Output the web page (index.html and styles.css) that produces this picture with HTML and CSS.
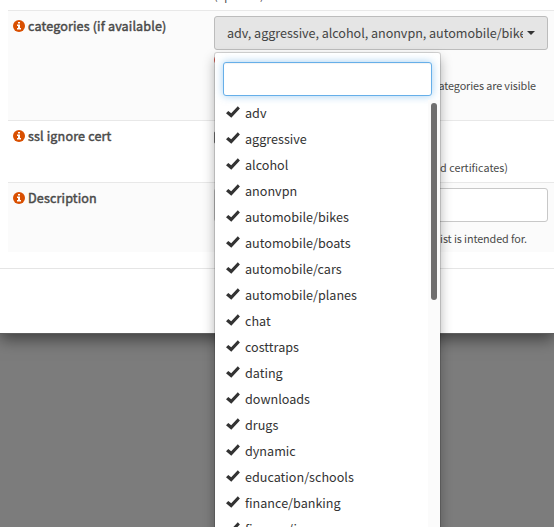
FILE: index.html
```html
<!DOCTYPE html>
<html lang="en">
<head>
<meta charset="utf-8">
<title>Edit blacklist</title>
<link rel="stylesheet" href="styles.css">
</head>
<body>
<svg class="defs" aria-hidden="true">
  <symbol id="info" viewBox="0 0 12 12">
    <circle cx="6" cy="6" r="6" fill="#d94f00"/>
    <path fill="#fff" d="M5 2h2v1.600H5zM4 4.500h3v3.600h1v1.500H4V8.100h1V6H4z"/>
  </symbol>
  <symbol id="check" viewBox="0 0 14 12">
    <path fill="#333" d="M0 7.300 2.300 4.900 5.200 7.300 11.800.2 13.900 2.400 5.300 11.700Z"/>
  </symbol>
</svg>
<main class="modal">
  <div class="previous"><small>(optional)</small></div>
  <section class="row row-categories">
    <div class="label"><svg><use href="#info"/></svg><b>categories (if available)</b></div>
    <div class="field">
      <button class="select"><span>adv, aggressive, alcohol, anonvpn, automobile/bikes</span><i class="caret"></i></button>
      <div class="clear"></div>
      <small class="help visible-help">categories are visible</small>
      <div class="menu">
        <input class="search" type="text" aria-label="Search">
        <div class="list">
          <ul>
            <li><svg><use href="#check"/></svg><span>adv</span></li>
            <li><svg><use href="#check"/></svg><span>aggressive</span></li>
            <li><svg><use href="#check"/></svg><span>alcohol</span></li>
            <li><svg><use href="#check"/></svg><span>anonvpn</span></li>
            <li><svg><use href="#check"/></svg><span>automobile/bikes</span></li>
            <li><svg><use href="#check"/></svg><span>automobile/boats</span></li>
            <li><svg><use href="#check"/></svg><span>automobile/cars</span></li>
            <li><svg><use href="#check"/></svg><span>automobile/planes</span></li>
            <li><svg><use href="#check"/></svg><span>chat</span></li>
            <li><svg><use href="#check"/></svg><span>costtraps</span></li>
            <li><svg><use href="#check"/></svg><span>dating</span></li>
            <li><svg><use href="#check"/></svg><span>downloads</span></li>
            <li><svg><use href="#check"/></svg><span>drugs</span></li>
            <li><svg><use href="#check"/></svg><span>dynamic</span></li>
            <li><svg><use href="#check"/></svg><span>education/schools</span></li>
            <li><svg><use href="#check"/></svg><span>finance/banking</span></li>
            <li><svg><use href="#check"/></svg><span>finance/insurance</span></li>
          </ul>
          <div class="track"><div class="thumb"></div></div>
        </div>
      </div>
    </div>
  </section>
  <section class="row row-ssl">
    <div class="label"><svg><use href="#info"/></svg><b>ssl ignore cert</b></div>
    <div class="field">
      <div class="checkbox"></div>
      <small class="help cert-help">d certificates)</small>
    </div>
  </section>
  <section class="row row-description">
    <div class="label"><svg><use href="#info"/></svg><b>Description</b></div>
    <div class="field">
      <input class="text" type="text" aria-label="Description">
      <small class="help list-help">list is intended for.</small>
    </div>
  </section>
  <footer class="footer"></footer>
</main>
</body>
</html>
```
FILE: styles.css
```css
* { box-sizing: border-box; }
body {
  margin: 0;
  height: 527px;
  overflow: hidden;
  background: #7c7c7c;
  color: #3c3c3b;
  font: 12.6px/20px "Noto Sans CJK SC", "Noto Sans", sans-serif;
}
.defs { position: absolute; width: 0; height: 0; }
.modal {
  height: 334px;
  background: #fff;
  border-bottom: 1px solid #5e5e5e;
  box-shadow: 0 5px 15px rgba(0, 0, 0, .5);
}
.previous { height: 10px; padding-left: 214px; overflow: hidden; }
.previous small { display: block; margin-top: -12px; font-size: 10.8px; line-height: 14px; color: #4a4a49; }
.row {
  display: flex;
  margin-left: 8px;
  border-top: 1px solid #e8e8e8;
}
.row-categories { height: 110px; background: #fbfbfb; }
.row-ssl { height: 62px; }
.row-description { height: 70px; background: #fbfbfb; }
.label {
  display: flex;
  align-items: flex-start;
  gap: 3px;
  width: 206px;
  padding: 5px 0 0 5px;
}
.label svg { width: 12px; height: 12px; margin-top: 4px; }
.label b { font-weight: 400; letter-spacing: .14px; -webkit-text-stroke: .45px #4a4a49; color: #4a4a49; }
.field { position: relative; width: 334px; padding-top: 5px; }
.select {
  display: flex;
  align-items: center;
  gap: 4px;
  width: 334px;
  height: 34px;
  padding: 0 12px;
  border: 1px solid #bcbcbc;
  border-radius: 3px;
  background: #e5e5e5;
  color: #444;
  font: inherit;
  letter-spacing: -.04px;
}
.select span { flex: none; width: 296px; overflow: hidden; white-space: nowrap; text-align: left; }
.caret { flex: none; width: 8px; height: 4px; background: #333; clip-path: polygon(0 0, 100% 0, 50% 100%); }
.clear { width: 12px; height: 12px; margin-top: 4px; border-radius: 50%; background: #e25a50; }
.help { display: block; font-size: 10.8px; line-height: 16px; text-align: right; color: #4a4a49; }
.visible-help { margin: 11px 12px 0 0; letter-spacing: -.1px; }
.checkbox { width: 13px; height: 13px; margin-top: 5px; border: 1px solid #767676; border-radius: 2px; }
.cert-help { margin: 15px 40px 0 0; }
.text {
  display: block;
  width: 334px;
  height: 34px;
  border: 1px solid #c8c8c8;
  border-radius: 3px;
  background: #fff;
}
.list-help { margin: 8px 21px 0 0; letter-spacing: -.1px; }
.footer { height: 65px; margin-top: 16px; border-top: 1px solid #e5e5e5; }
.menu {
  position: absolute;
  z-index: 2;
  left: 0;
  top: 41px;
  width: 227px;
  height: 500px;
  padding-top: 9px;
  border: 1px solid rgba(0, 0, 0, .15);
  border-radius: 3px;
  background: #fff;
  background-clip: padding-box;
  box-shadow: 0 6px 12px rgba(0, 0, 0, .28);
}
.search {
  display: block;
  width: 209px;
  height: 34px;
  margin: 0 0 4px 8px;
  border: 1px solid #66afe9;
  border-radius: 3px;
  outline: 0;
  background: #fff;
  box-shadow: inset 0 1px 1px rgba(0, 0, 0, .05), 0 0 8px rgba(102, 175, 233, .6);
}
.list { display: flex; justify-content: space-between; }
ul { margin: 0; padding: 0; list-style: none; }
li { display: flex; align-items: center; gap: 5px; height: 26px; padding-left: 11px; color: #333; }
li svg { width: 14px; height: 12px; margin-top: -2px; }
.track { width: 12px; padding: 3px 3px 0; background: #fbfbfb; }
.thumb { width: 6px; height: 197px; border-radius: 3px; background: #706f6f; }
```
